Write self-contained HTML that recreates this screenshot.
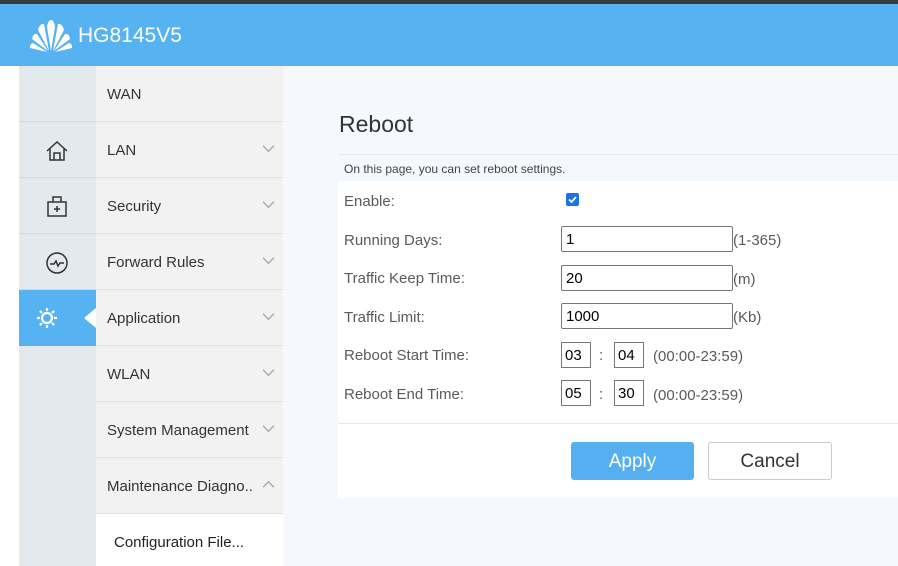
<!DOCTYPE html>
<html><head><style>
*{margin:0;padding:0;box-sizing:border-box}
html{overflow:hidden;width:898px;height:566px}
body{width:898px;height:566px;overflow:hidden;background:#f5f8fc;font-family:"Liberation Sans",sans-serif;position:relative}
.top{position:absolute;left:0;top:0;width:898px;height:4px;background:#3a3a3a}
.hdr{position:absolute;left:0;top:4px;width:898px;height:62px;background:#56b2f1;color:#fff}
.hdr .t{position:absolute;left:78px;top:20px;font-size:21px}
.white{position:absolute;left:0;top:66px;width:19px;height:500px;background:#fff}
.icol{position:absolute;left:19px;top:66px;width:77px;height:500px;background:#e4e9ee}
.mcol{position:absolute;left:96px;top:66px;width:187px;height:500px;background:#f2f2f2}
.it{position:absolute;left:96px;width:187px;height:56px;border-bottom:1px solid #e0e0e0;font-size:15px;color:#333;padding:20px 0 0 11px}
.ic{position:absolute;left:19px;width:77px;height:56px;border-bottom:1px solid #d0d6dc}
.chev{position:absolute;right:8px;top:22px;width:13px;height:9px}
.lbl{position:absolute;left:344px;font-size:15px;color:#5a5a5a}
.inp{position:absolute;left:561px;width:172px;height:26px;border:1px solid #777;border-radius:2px;background:#fff;font-size:15px;padding:4px 4px;color:#000}
.sm{position:absolute;width:30px;height:26px;border:1px solid #777;background:#fff;font-size:15px;padding:4px 3px}
.unit{position:absolute;font-size:15px;color:#5a5a5a}
</style></head><body>
<div class="top"></div>
<div class="hdr">
<svg style="position:absolute;left:29px;top:15px" width="44" height="34" viewBox="0 0 44 34" fill="#fff">
<path d="M22 32 L18 8 Q19 1 22 1 Q25 1 26 8 Z"/>
<path d="M20 32 L9 11 Q11 4 15 5 Z"/><path d="M24 32 L35 11 Q33 4 29 5 Z"/>
<path d="M19 32 L3 20 Q4 14 8 15 Z"/><path d="M25 32 L41 20 Q40 14 36 15 Z"/>
<path d="M18 33 L1 29 Q1 24 4 24 Z"/><path d="M26 33 L43 29 Q43 24 40 24 Z"/>
</svg>
<div class="t">HG8145V5</div></div>
<div class="white"></div><div class="icol"></div><div class="mcol"></div>

<div class="ic" style="top:66px"></div>
<div class="ic" style="top:122px"><svg style="position:absolute;left:26px;top:17px" width="24" height="24" viewBox="0 0 24 24" fill="none" stroke="#333" stroke-width="1.5"><path d="M2 12 L12 3 L22 12 M5 10 V21 H19 V10 M9 21 V14 H15 V21"/></svg></div>
<div class="ic" style="top:178px"><svg style="position:absolute;left:26px;top:16px" width="24" height="24" viewBox="0 0 24 24" fill="none" stroke="#333" stroke-width="1.5"><path d="M3 8 H21 V22 H3 Z M8 8 V3 H16 V8 M12 12 V18 M9 15 H15"/></svg></div>
<div class="ic" style="top:234px"><svg style="position:absolute;left:26px;top:17px" width="24" height="24" viewBox="0 0 24 24" fill="none" stroke="#333" stroke-width="1.5"><circle cx="12" cy="12" r="10"/><path d="M5 13 H9 L11 10 L13 15 L15 12 H19"/></svg></div>
<div class="ic" style="top:290px;background:#56b2f1;border:none"><svg style="position:absolute;left:16px;top:16px" width="24" height="24" viewBox="0 0 24 24" fill="none" stroke="#fff" stroke-width="2.2"><circle cx="12" cy="12" r="5"/><path d="M12 2V5M12 19V22M2 12H5M19 12H22M4.9 4.9L7 7M17 17L19.1 19.1M4.9 19.1L7 17M17 7L19.1 4.9"/></svg>
<div style="position:absolute;right:0;top:18px;width:0;height:0;border-top:10px solid transparent;border-bottom:10px solid transparent;border-right:12px solid #fff"></div></div>

<div class="it" style="top:66px">WAN</div>
<div class="it" style="top:122px">LAN<svg class="chev" viewBox="0 0 14 10"><path d="M1 2 L7 8 L13 2" fill="none" stroke="#aaa" stroke-width="1.6"/></svg></div>
<div class="it" style="top:178px">Security<svg class="chev" viewBox="0 0 14 10"><path d="M1 2 L7 8 L13 2" fill="none" stroke="#aaa" stroke-width="1.6"/></svg></div>
<div class="it" style="top:234px">Forward Rules<svg class="chev" viewBox="0 0 14 10"><path d="M1 2 L7 8 L13 2" fill="none" stroke="#aaa" stroke-width="1.6"/></svg></div>
<div class="it" style="top:290px">Application<svg class="chev" viewBox="0 0 14 10"><path d="M1 2 L7 8 L13 2" fill="none" stroke="#aaa" stroke-width="1.6"/></svg></div>
<div class="it" style="top:346px">WLAN<svg class="chev" viewBox="0 0 14 10"><path d="M1 2 L7 8 L13 2" fill="none" stroke="#aaa" stroke-width="1.6"/></svg></div>
<div class="it" style="top:402px">System Management<svg class="chev" viewBox="0 0 14 10"><path d="M1 2 L7 8 L13 2" fill="none" stroke="#aaa" stroke-width="1.6"/></svg></div>
<div class="it" style="top:458px">Maintenance Diagno..<svg class="chev" viewBox="0 0 14 10"><path d="M1 8 L7 2 L13 8" fill="none" stroke="#aaa" stroke-width="1.6"/></svg></div>
<div class="it" style="top:514px;height:52px;background:#fff;border:none;padding-left:18px;color:#222">Configuration File...</div>

<div style="position:absolute;left:339px;top:111px;font-size:23px;color:#333">Reboot</div>
<div style="position:absolute;left:338px;top:154px;width:560px;height:1px;background:#e3e8ee"></div>
<div style="position:absolute;left:344px;top:162px;font-size:12px;color:#444">On this page, you can set reboot settings.</div>
<div style="position:absolute;left:338px;top:181px;width:560px;height:317px;background:#fff"></div>
<div style="position:absolute;left:338px;top:423px;width:560px;height:1px;background:#e6e6e6"></div>

<div class="lbl" style="top:193px">Enable:</div>
<div style="position:absolute;left:566px;top:193px;width:13px;height:13px;background:#1a73e8;border-radius:2px"><svg width="13" height="13" viewBox="0 0 13 13"><path d="M3 6.5 L5.5 9 L10 4" fill="none" stroke="#fff" stroke-width="1.8"/></svg></div>
<div class="lbl" style="top:232px">Running Days:</div>
<div class="inp" style="top:226px">1</div><div class="unit" style="left:733px;top:232px">(1-365)</div>
<div class="lbl" style="top:270px">Traffic Keep Time:</div>
<div class="inp" style="top:265px">20</div><div class="unit" style="left:733px;top:271px">(m)</div>
<div class="lbl" style="top:309px">Traffic Limit:</div>
<div class="inp" style="top:303px">1000</div><div class="unit" style="left:733px;top:309px">(Kb)</div>
<div class="lbl" style="top:347px">Reboot Start Time:</div>
<div class="sm" style="left:561px;top:342px">03</div><div class="unit" style="left:599px;top:347px">:</div><div class="sm" style="left:614px;top:342px">04</div><div class="unit" style="left:653px;top:348px">(00:00-23:59)</div>
<div class="lbl" style="top:386px">Reboot End Time:</div>
<div class="sm" style="left:561px;top:380px">05</div><div class="unit" style="left:599px;top:386px">:</div><div class="sm" style="left:614px;top:380px">30</div><div class="unit" style="left:653px;top:387px">(00:00-23:59)</div>

<div style="position:absolute;left:571px;top:442px;width:123px;height:38px;background:#55b0f2;border-radius:3px;color:#fff;font-size:19px;text-align:center;line-height:40px">Apply</div>
<div style="position:absolute;left:708px;top:442px;width:124px;height:38px;background:#fff;border:1px solid #ccc;border-radius:3px;color:#333;font-size:19px;text-align:center;line-height:38px">Cancel</div>
</body></html>
